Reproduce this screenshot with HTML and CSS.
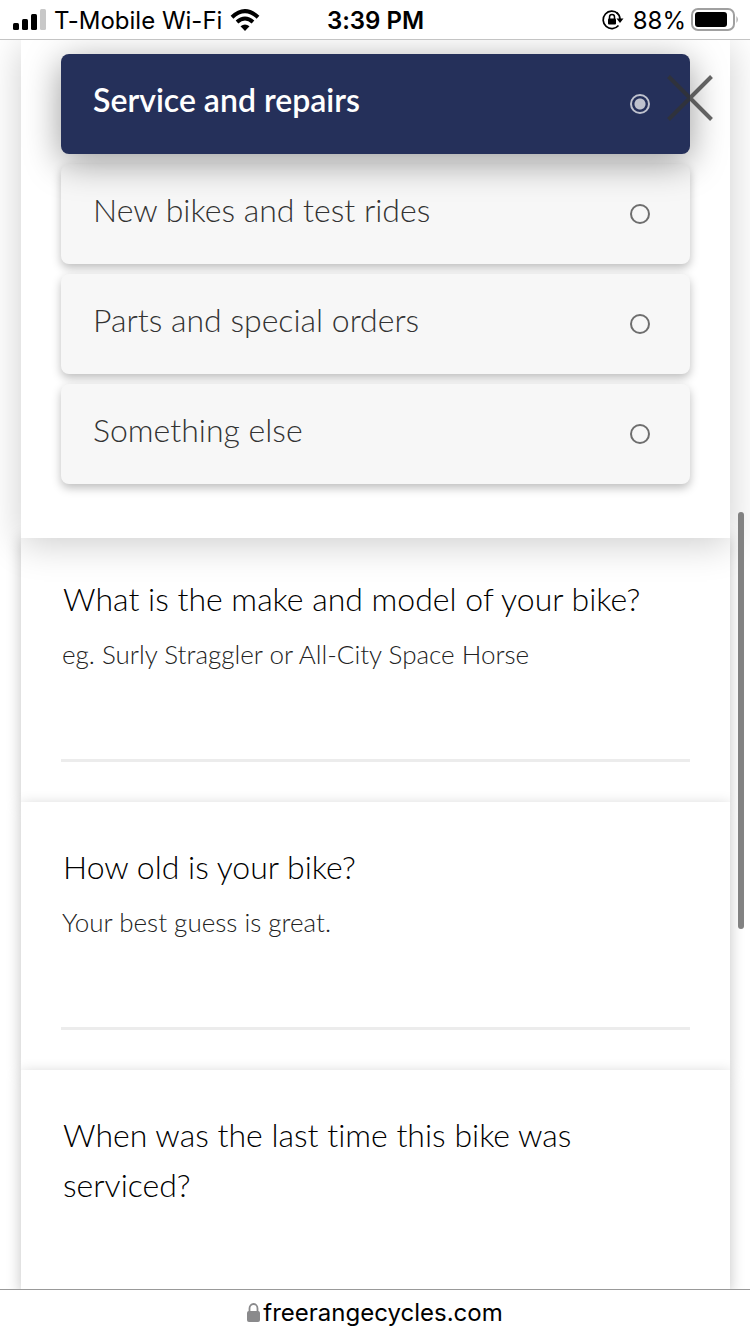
FILE: index.html
```html
<!DOCTYPE html>
<html lang="en">
<head>
<meta charset="utf-8">
<meta name="viewport" content="width=device-width, initial-scale=1">
<title>Free Range Cycles</title>
<link rel="stylesheet" href="styles.css">
</head>
<body>
<header class="status">
  <div class="status-side">
    <svg class="signal" width="34" height="22" viewBox="0 0 34 22" aria-hidden="true">
      <rect x="1" y="14" width="6" height="7" rx="1.5"/><rect x="10" y="10" width="6" height="11" rx="1.5"/><rect x="19" y="5" width="6" height="16" rx="1.5"/><rect x="28" y="0" width="6" height="21" rx="1.5" fill="#c8c8c8"/>
    </svg>
    <span>T-Mobile Wi-Fi</span>
    <svg class="wifi" width="30" height="22" viewBox="0 0 30 22" aria-hidden="true">
      <path d="M2 8.2Q15-4 28 8.2M7 13Q15 6 23 13" fill="none" stroke="#000" stroke-width="4"/>
      <path d="M10.500 17.300Q15 13.500 19.500 17.300L15 22Z"/>
    </svg>
  </div>
  <time class="clock">3:39 PM</time>
  <div class="status-side status-end">
    <svg width="22" height="20" viewBox="0 0 22 20" aria-hidden="true">
      <path d="M15.800 3.500A8.700 8.700 0 1 0 16.500 15.500" fill="none" stroke="#000" stroke-width="1.700"/>
      <path d="M18 9A8.700 8.700 0 0 0 14.500 2.500" fill="none" stroke="#000" stroke-width="1.700"/>
      <path d="M14.500 8.500H21.500L18 13Z"/>
      <rect x="6" y="8.500" width="8" height="6" rx="1"/>
      <path d="M7.500 9V7a2.500 2.500 0 0 1 5 0v2" fill="none" stroke="#000" stroke-width="1.500"/>
    </svg>
    <span class="percent">88%</span>
    <svg class="battery" width="48" height="24" viewBox="0 0 48 24" aria-hidden="true">
      <rect x="1" y="1" width="42" height="21" rx="6" fill="none" stroke="#a0a0a0" stroke-width="2"/>
      <rect x="4" y="4" width="32" height="15" rx="3"/>
      <path d="M45.500 8Q48 11.500 45.500 15Z" fill="#a0a0a0"/>
    </svg>
  </div>
</header>

<main class="page">
  <form class="form">
    <fieldset class="card choices" aria-label="What can we help with?">
      <label class="option option-on"><span>Service and repairs</span><input class="radio" type="radio" name="topic" checked></label>
      <label class="option"><span>New bikes and test rides</span><input class="radio" type="radio" name="topic"></label>
      <label class="option"><span>Parts and special orders</span><input class="radio" type="radio" name="topic"></label>
      <label class="option"><span>Something else</span><input class="radio" type="radio" name="topic"></label>
    </fieldset>
    <div class="card question question-first">
      <label class="title" for="model">What is the make and model of your bike?</label>
      <p class="hint" id="model-hint">eg. Surly Straggler or All-City Space Horse</p>
      <input class="field" id="model" type="text" aria-describedby="model-hint">
    </div>
    <div class="card question">
      <label class="title" for="age">How old is your bike?</label>
      <p class="hint" id="age-hint">Your best guess is great.</p>
      <input class="field" id="age" type="text" aria-describedby="age-hint">
    </div>
    <div class="card question question-last">
      <span class="title">When was the last time this bike was serviced?</span>
    </div>
  </form>
  <button class="close" type="button" aria-label="Close">
    <svg width="46" height="46" viewBox="0 0 46 46" aria-hidden="true"><path d="M1.500 1.500L44.500 44.500M44.500 1.500L1.500 44.500" stroke="#333" stroke-opacity=".75" stroke-width="4"/></svg>
  </button>
  <div class="scroll-thumb"></div>
</main>

<footer class="address">
  <svg width="13" height="19" viewBox="0 0 13 19" aria-hidden="true">
    <rect x="0" y="8" width="13" height="11" rx="2" fill="#8a8a8c"/>
    <path d="M2.500 9V5.500a4 4.500 0 0 1 8 0V9" fill="none" stroke="#8a8a8c" stroke-width="1.800"/>
  </svg>
  <span>freerangecycles.com</span>
</footer>
</body>
</html>
```
FILE: styles.css
```css
* { box-sizing: border-box; }

body {
  margin: 0;
  min-height: 100vh;
  display: flex;
  flex-direction: column;
  background: #fff;
  color: #000;
  font-family: Lato, "Open Sans", sans-serif;
  font-weight: 300;
  font-variant-ligatures: none;
}

.status {
  position: relative;
  z-index: 5;
  display: grid;
  grid-template-columns: 1fr auto 1fr;
  align-items: center;
  height: 40px;
  padding: 1px 11px 0 12px;
  border-bottom: 1px solid #c4c4c4;
  background: #fff;
  font-family: Inter, Roboto, sans-serif;
  font-size: 24px;
  font-weight: 400;
}

.status-side { display: flex; align-items: center; gap: 8px; }
.status-end { justify-content: flex-end; gap: 5px; }
.percent { margin-left: 4px; }
.clock { font-weight: 600; }

.page {
  position: relative;
  flex: 1;
  display: flex;
  flex-direction: column;
  overflow: hidden;
}

.form {
  flex: 1;
  display: flex;
  flex-direction: column;
  padding: 0 20px 0 21px;
}

.card {
  position: relative;
  min-width: 0;
  margin: 0;
  border: 0;
  background: #fff;
  box-shadow: 0 4px 14px rgba(0, 0, 0, .24);
}

.choices {
  z-index: 2;
  display: flex;
  flex-direction: column;
  gap: 10px;
  padding: 14px 40px 54px;
  box-shadow: 0 6px 36px rgba(0, 0, 0, .2);
}

.option {
  display: flex;
  align-items: center;
  justify-content: space-between;
  height: 100px;
  padding: 0 40px 10px 32px;
  border-radius: 8px;
  background: #f7f7f7;
  box-shadow: 0 4px 10px rgba(0, 0, 0, .26);
  color: #333;
  font-size: 32px;
}

.option-on {
  position: relative;
  background: #25305a;
  box-shadow: 0 8px 36px rgba(0, 0, 0, .4);
  color: #fff;
  font-weight: 600;
}

.radio {
  appearance: none;
  width: 20px;
  height: 20px;
  margin: 10px 0 0;
  border: 2px solid #6e6e6e;
  border-radius: 50%;
}

.radio:checked {
  border-color: #bfc2ce;
  background: radial-gradient(circle, #bfc2ce 5px, transparent 6px);
}

.question { padding: 40px 40px; }
.question-first { margin-top: -4px; }
.question-last { flex: 1; }

.title {
  display: block;
  padding-left: 2px;
  font-size: 32px;
  line-height: 50px;
}

.hint {
  margin: 10px 0 0;
  padding-left: 1px;
  color: #222;
  font-size: 26px;
  line-height: 40px;
}

.field {
  display: block;
  width: 100%;
  height: 88px;
  padding: 40px 0 0;
  border: 0;
  border-bottom: 3px solid #ececec;
  background: none;
  font: inherit;
  font-size: 32px;
}

.close {
  position: absolute;
  z-index: 3;
  top: 35px;
  right: 37px;
  padding: 0;
  border: 0;
  background: none;
}

.close svg { display: block; }

.scroll-thumb {
  position: absolute;
  z-index: 4;
  top: 472px;
  right: 6px;
  width: 6px;
  height: 417px;
  border-radius: 3px;
  background: #828282;
}

.address {
  position: relative;
  z-index: 5;
  display: flex;
  align-items: center;
  justify-content: center;
  gap: 3px;
  height: 45px;
  border-top: 1px solid #999;
  background: #fff;
  font-family: Inter, Roboto, sans-serif;
  font-size: 24px;
  font-weight: 400;
}
```
